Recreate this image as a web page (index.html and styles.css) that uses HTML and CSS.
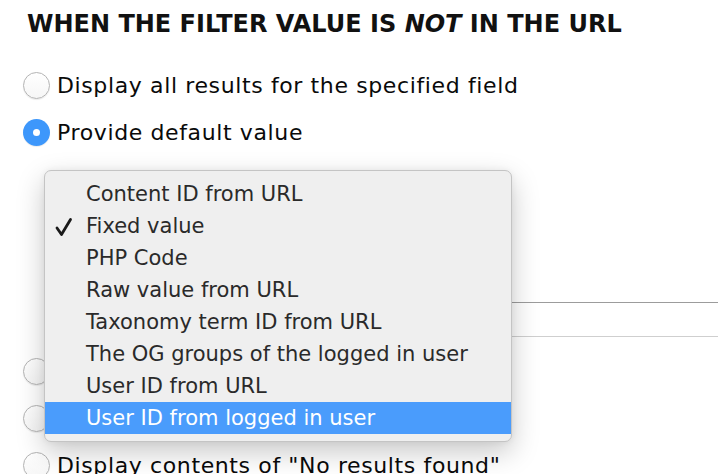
FILE: index.html
```html
<!DOCTYPE html>
<html>
<head>
<meta charset="utf-8">
<link rel="stylesheet" href="styles.css">
</head>
<body>
<div class="page">
  <h2 class="title">WHEN THE FILTER VALUE IS <em>NOT</em> IN THE URL</h2>
  <div class="options">
    <label class="radio-row"><span class="radio"></span><span class="label">Display all results for the specified field</span></label>
    <label class="radio-row"><span class="radio checked"></span><span class="label">Provide default value</span></label>
    <div class="subform">
      <div class="select-field">
        <div class="menu">
          <div class="item">Content ID from URL</div>
          <div class="item selected"><svg class="check" width="18" height="20" viewBox="0 0 18 20"><path d="M2 11 L6.5 17.5 L15.5 2.5" fill="none" stroke="#1a1a1a" stroke-width="2.8" stroke-linecap="round" stroke-linejoin="round"/></svg>Fixed value</div>
          <div class="item">PHP Code</div>
          <div class="item">Raw value from URL</div>
          <div class="item">Taxonomy term ID from URL</div>
          <div class="item">The OG groups of the logged in user</div>
          <div class="item">User ID from URL</div>
          <div class="item active">User ID from logged in user</div>
        </div>
      </div>
      <div class="input"></div>
    </div>
    <label class="radio-row"><span class="radio"></span></label>
    <label class="radio-row"><span class="radio"></span></label>
    <label class="radio-row"><span class="radio"></span><span class="label">Display contents of "No results found"</span></label>
  </div>
</div>
</body>
</html>
```
FILE: styles.css
```css
html, body {
  margin: 0;
  padding: 0;
  background: #ffffff;
  overflow: hidden;
}
.page {
  width: 718px;
  height: 474px;
  overflow: hidden;
  padding-left: 23px;
  box-sizing: border-box;
  font-family: "DejaVu Sans", "Noto Sans", sans-serif;
  color: #111;
}
.title {
  margin: 10px 0 0 4px;
  font-size: 24px;
  font-weight: bold;
  line-height: 28px;
  white-space: nowrap;
}
.title em {
  font-style: italic;
}
.options {
  display: flex;
  flex-direction: column;
  margin-top: 24px;
}
.radio-row {
  display: flex;
  align-items: center;
  height: 47px;
  gap: 7px;
  flex: none;
}
.radio {
  width: 27px;
  height: 27px;
  box-sizing: border-box;
  border-radius: 50%;
  border: 1px solid #b4b4b4;
  background: linear-gradient(#ffffff, #f6f6f6);
  box-shadow: 0 1px 1px rgba(0,0,0,0.08);
  flex: none;
  position: relative;
}
.radio.checked {
  border: none;
  background: #3d97fb;
}
.radio.checked::after {
  content: "";
  position: absolute;
  left: 10px;
  top: 10px;
  width: 7px;
  height: 7px;
  border-radius: 50%;
  background: #fff;
}
.label {
  font-size: 22px;
  letter-spacing: 0.62px;
  color: #0a0a0a;
  white-space: nowrap;
}
.subform {
  padding-left: 21px;
  display: flex;
  flex-direction: column;
  height: 192px;
  flex: none;
}
.select-field {
  position: relative;
  height: 146px;
}
.input {
  height: 35px;
  border-top: 1px solid #9c9c9c;
  border-bottom: 1px solid #cfcfcf;
  margin-right: -40px;
  box-sizing: border-box;
}
.menu {
  position: absolute;
  left: 0;
  top: 14px;
  width: 468px;
  box-sizing: border-box;
  padding: 7px 0 7px;
  background: #efefef;
  border: 1px solid #c4c4c4;
  border-radius: 7px;
  box-shadow: 0 10px 28px rgba(0,0,0,0.22), 0 0 6px rgba(0,0,0,0.06);
  z-index: 10;
  overflow: hidden;
}
.item {
  height: 32px;
  line-height: 32px;
  padding-left: 41px;
  font-size: 21px;
  color: #2a2a2a;
  position: relative;
  white-space: nowrap;
}
.item .check {
  position: absolute;
  left: 10px;
  top: 7px;
}
.item.active {
  background: #4a9cfc;
  color: #ffffff;
}
```
